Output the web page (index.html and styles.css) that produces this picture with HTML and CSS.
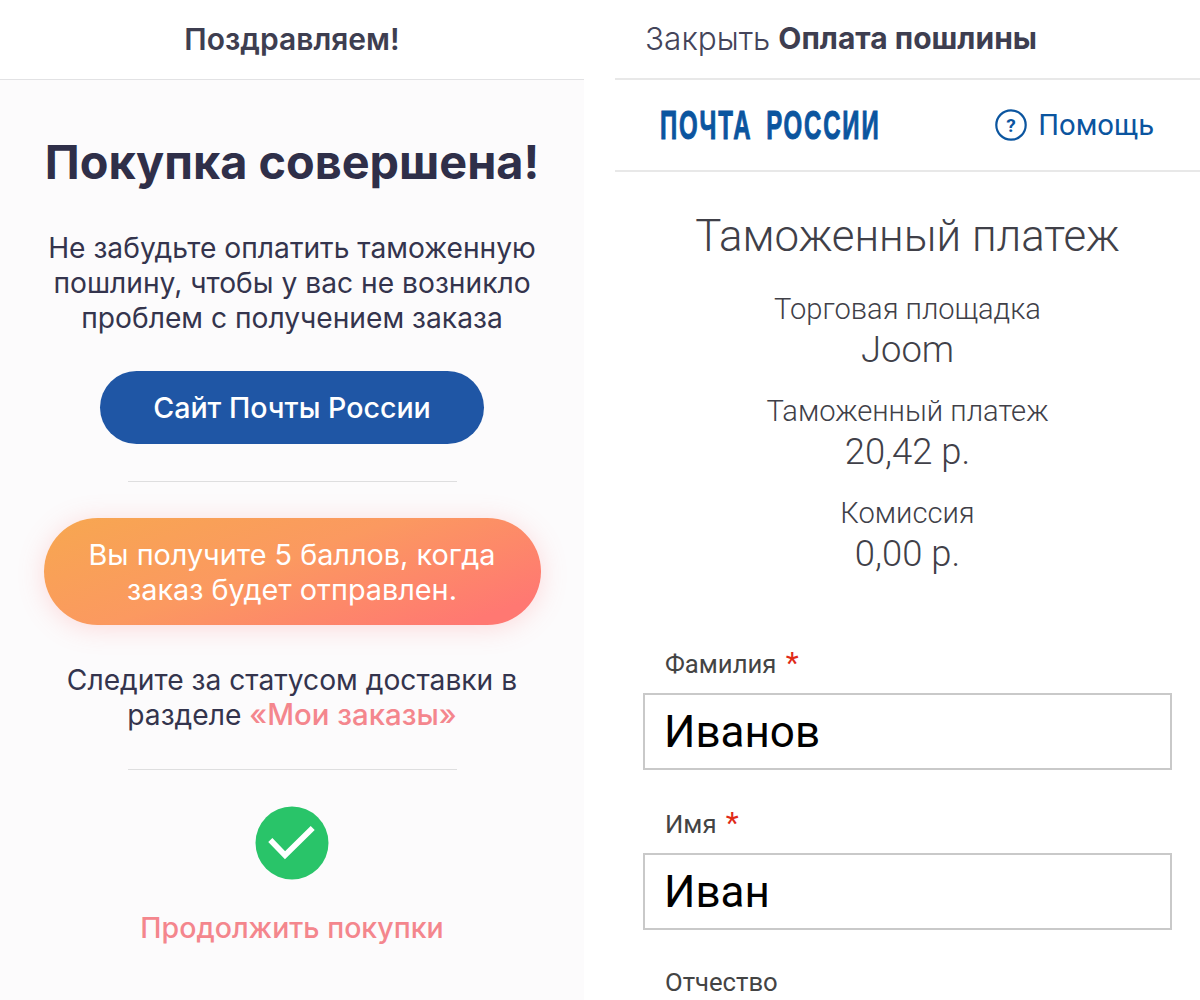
FILE: index.html
```html
<!DOCTYPE html>
<html lang="ru">
<head>
<meta charset="utf-8">
<title>Оплата пошлины</title>
<link rel="stylesheet" href="styles.css">
</head>
<body>
<div class="page">
  <section class="left">
    <header class="left-head">Поздравляем!</header>
    <div class="left-body">
      <h1 class="title">Покупка совершена!</h1>
      <p class="para para-first">Не забудьте оплатить таможенную<br>пошлину, чтобы у вас не возникло<br>проблем с получением заказа</p>
      <div class="btn-blue">Сайт Почты России</div>
      <div class="rule rule-a"></div>
      <div class="btn-grad">Вы получите 5 баллов, когда<br>заказ будет отправлен.</div>
      <p class="para para-second">Следите за статусом доставки в<br>разделе <span class="pink">«Мои заказы»</span></p>
      <div class="rule rule-b"></div>
      <svg class="check" width="74" height="74" viewBox="0 0 74 74"><circle cx="37" cy="37" r="36.5" fill="#29c469"/><path d="M15.3 34 L30 49.3 L57.7 22" fill="none" stroke="#fff" stroke-width="5.7"/></svg>
      <div class="continue">Продолжить покупки</div>
    </div>
  </section>
  <section class="right">
    <header class="right-head"><span class="close">Закрыть</span><span class="pay">Оплата пошлины</span></header>
    <div class="brand">
      <span class="logo"><span class="logo-text">ПОЧТА РОССИИ</span></span>
      <span class="help">
        <svg width="32" height="32" viewBox="0 0 32 32"><circle cx="16" cy="16" r="14.7" fill="none" stroke="#0b559f" stroke-width="2.2"/><text x="16" y="22.5" text-anchor="middle" class="help-q">?</text></svg>
        <span>Помощь</span>
      </span>
    </div>
    <div class="summary">
      <h2 class="sum-title">Таможенный платеж</h2>
      <div class="sum-label sum-first">Торговая площадка</div>
      <div class="sum-value">Joom</div>
      <div class="sum-label sum-next">Таможенный платеж</div>
      <div class="sum-value">20,42 р.</div>
      <div class="sum-label sum-next">Комиссия</div>
      <div class="sum-value">0,00 р.</div>
    </div>
    <form class="form">
      <div class="f-label">Фамилия <span class="req">*</span></div>
      <div class="f-input">Иванов</div>
      <div class="f-label f-gap">Имя <span class="req">*</span></div>
      <div class="f-input">Иван</div>
      <div class="f-label f-gap-last">Отчество</div>
    </form>
  </section>
</div>
</body>
</html>
```
FILE: styles.css
```css
* { box-sizing: border-box; }
html, body { margin: 0; padding: 0; height: 1000px; overflow: hidden; background: #fff; }
.page { display: flex; gap: 31px; height: 1000px; }
.left { width: 584px; height: 1000px; background: #fcfbfc; font-family: Inter, sans-serif; color: #34344d; overflow: hidden; }
.left-head { height: 80px; background: #fff; border-bottom: 1px solid #e2e2e4; text-align: center; font-size: 30px; font-weight: 600; line-height: 78px; color: #3e3e50; }
.left-body { display: flex; flex-direction: column; align-items: center; }
.title { margin: 52px 0 0; font-size: 46.8px; line-height: 60px; font-weight: 700; color: #2f2f49; letter-spacing: 0; }
.para { margin: 0; font-size: 28.2px; line-height: 35px; text-align: center; font-weight: 400; }
.para-first { margin-top: 39px; }
.btn-blue { margin-top: 35px; width: 384px; height: 73px; border-radius: 37px; background: #1f56a5; color: #fff; font-size: 28.6px; line-height: 73px; text-align: center; font-weight: 500; }
.rule { width: 329px; height: 1px; background: #dededf; }
.rule-a { margin-top: 37px; }
.btn-grad { margin-top: 36px; width: 497px; height: 107px; border-radius: 54px; background: linear-gradient(160deg, #f7a750 0%, #fb9960 45%, #ff7872 90%); box-shadow: 0 3px 26px rgba(255, 120, 120, .25); color: #fff; font-size: 28.8px; line-height: 35px; text-align: center; padding-top: 19px; }
.para-second { margin-top: 38px; height: 70px; }
.pink { color: #f4868d; font-weight: 500; font-size: 29.4px; line-height: 1; }
.rule-b { margin-top: 36px; }
.check { margin-top: 36px; display: block; }
.continue { margin-top: 30px; font-size: 28.5px; line-height: 36px; color: #f4868d; font-weight: 500; }
.right { width: 585px; font-family: Roboto, sans-serif; color: #3e3e50; overflow: hidden; }
.right-head { height: 80px; border-bottom: 2px solid #e8e8e8; display: flex; align-items: center; padding: 0 0 2px 30px; gap: 8px; }
.close { font-family: Inter, sans-serif; font-size: 31.5px; font-weight: 300; color: #44445a; }
.pay { font-family: Inter, sans-serif; font-size: 30px; font-weight: 700; color: #3e3e50; }
.brand { height: 92px; border-bottom: 2px solid #e8e8e8; display: flex; align-items: center; justify-content: space-between; padding: 0 46px 0 45px; }
.logo { display: block; width: 220px; height: 40px; overflow: visible; }
.logo-text { display: block; width: max-content; font-family: "Liberation Sans", sans-serif; font-weight: 700; font-size: 40px; line-height: 40px; letter-spacing: 3px; word-spacing: 9px; color: #0b559f; -webkit-text-stroke: 1px #0b559f; transform-origin: 0 50%; transform: scale(0.6, 1); }
.help { display: flex; align-items: center; gap: 11px; color: #0b559f; font-size: 29.2px; font-weight: 400; }
.help svg { display: block; }
.help-q { font-family: Roboto, sans-serif; font-size: 19px; font-weight: 700; fill: #0b559f; }
.summary { display: flex; flex-direction: column; align-items: center; font-weight: 300; }
.sum-title { margin: 36px 0 0; font-size: 43.8px; line-height: 56px; font-weight: 300; color: #404048; }
.sum-label { font-size: 29.1px; line-height: 36px; color: #404048; }
.sum-first { margin-top: 27px; }
.sum-next { margin-top: 20px; }
.sum-value { font-size: 36.4px; line-height: 46px; color: #404048; }
.form { margin-top: 70px; padding: 0 28px; display: flex; flex-direction: column; }
.f-label { font-size: 25.7px; line-height: 34px; padding-left: 22px; color: #444; }
.f-gap { margin-top: 37px; }
.f-gap-last { margin-top: 35px; }
.req { color: #e02a17; font-size: 30px; line-height: 20px; margin-left: 3px; }
.f-input { margin-top: 12px; height: 77px; border: 2px solid #c9c9c9; padding-left: 19px; font-size: 44px; line-height: 75px; color: #000; }
```
